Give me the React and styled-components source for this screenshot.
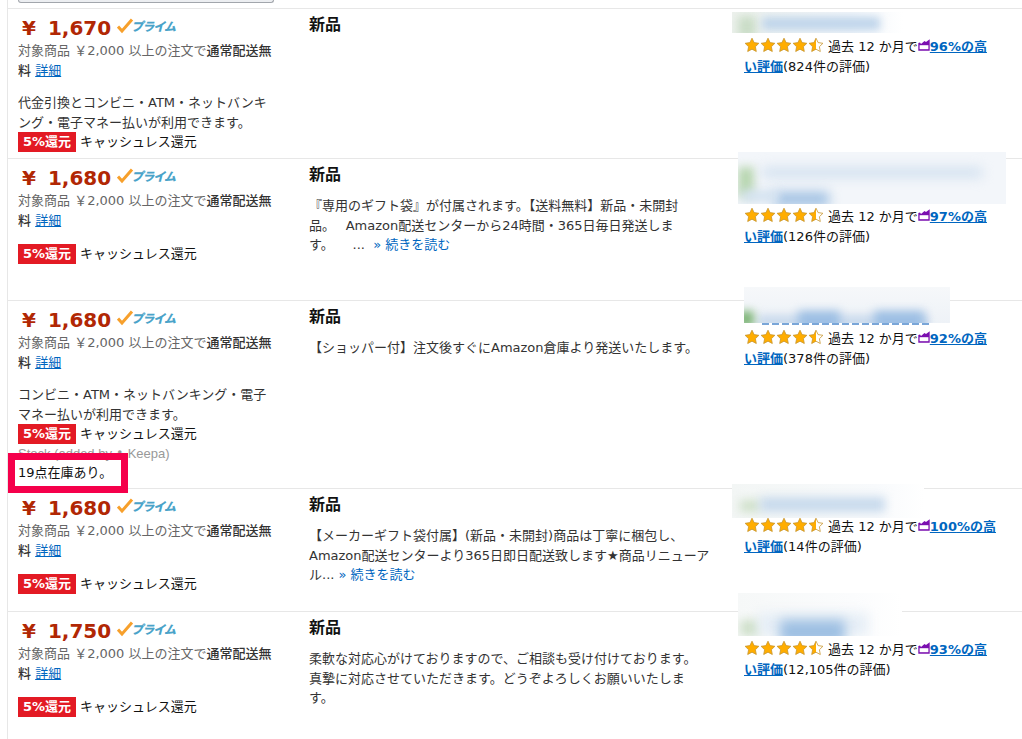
import React from "react"
import styled, { createGlobalStyle } from "styled-components"

const GlobalStyle = createGlobalStyle`
    html, body {
        margin: 0;
        padding: 0;
        background: #fff;
        overflow: hidden;
    }
    body {
        font-family: "DejaVu Sans", "Noto Sans CJK JP", sans-serif;
        font-size: 13px;
        line-height: 19.5px;
        color: #111;
    }
`

const Page = styled.div`
    position: relative;
    margin-left: 7px;
    height: 739px;
    overflow: hidden;
    border-left: 1px solid #e7e7e7;
`

const TopButton = styled.div`
    box-sizing: border-box;
    width: 256px;
    height: 3px;
    margin-left: 10px;
    margin-bottom: 5px;
    border: 1px solid #a2a6ac;
    border-top: none;
    border-radius: 0 0 3px 3px;
    background: #eceef1;
`

const Row = styled.div`
    position: relative;
    display: grid;
    grid-template-columns: 255px 385px 266px;
    column-gap: 36px;
    box-sizing: border-box;
    height: ${(p) => p.$height}px;
    padding: 5px 0 0 10px;
    border-top: 1px solid #e7e7e7;
`

const OfferCol = styled.div`
    position: relative;
`

const PriceLine = styled.div`
    display: flex;
    align-items: center;
    height: 28px;
    margin-bottom: -1px;
`

const Price = styled.span`
    font-size: 20px;
    font-weight: 700;
    line-height: 28px;
    word-spacing: 5px;
    color: #b12704;
    margin-left: 4px;
    white-space: pre;
`

const PrimeBadge = styled.span`
    display: inline-flex;
    align-items: center;
    margin-left: 6px;
    margin-top: -4px;
`

const PrimeText = styled.span`
    font-family: "Noto Sans CJK JP", sans-serif;
    font-size: 12px;
    font-weight: 900;
    font-style: italic;
    color: #4aa3c9;
    letter-spacing: -1px;
    margin-left: -3px;
    line-height: 16px;
`

const Shipping = styled.div`
    color: #666;
`

const ShippingStrong = styled.span`
    color: #333;
    font-weight: 500;
`

const TextLink = styled.a`
    color: #0066c0;
    text-decoration: ${(p) => (p.$underline ? "underline" : "none")};
`

const Payment = styled.div`
    margin-top: ${(p) => p.$top}px;
    color: #333;
`

const CashlessRow = styled.div`
    display: flex;
    align-items: center;
    gap: 4px;
    height: 20px;
    margin-top: ${(p) => p.$top || 0}px;
`

const CashlessBadge = styled.span`
    display: inline-block;
    width: 58px;
    height: 20px;
    line-height: 20px;
    text-align: center;
    background: #e31a24;
    color: #fff;
    font-weight: 700;
    font-size: 13px;
    white-space: nowrap;
`

const Keepa = styled.div`
    font-family: "Liberation Sans", sans-serif;
    color: #999;
`

const StockText = styled.div`
    color: #111;
    margin-top: -1px;
`

const RedFrame = styled.div`
    position: absolute;
    z-index: 2;
    left: -10px;
    top: 147px;
    width: 120px;
    height: 40px;
    box-sizing: border-box;
    border: 7px solid #f5004b;
`

const ConditionCol = styled.div`
    padding-top: 1px;
`

const ConditionTitle = styled.div`
    font-size: 16px;
    font-weight: 700;
    line-height: 20px;
    margin-bottom: 11px;
`

const Description = styled.div`
    color: #333;
    white-space: pre;
`

const SellerCol = styled.div`
    position: relative;
    padding-top: ${(p) => p.$top}px;
    margin-left: 14px;
`

const SellerInfo = styled.div`
    color: #111;
`

const Stars = styled.span`
    display: inline-flex;
    vertical-align: -2px;
    margin-right: 4px;
`

const Trend = styled.svg`
    vertical-align: 0;
`

const GoodLink = styled.a`
    color: #0066c0;
    font-weight: 700;
    text-decoration: underline;
`

const BlurPatch = styled.div`
    position: absolute;
    z-index: 1;
    left: ${(p) => p.$left}px;
    top: ${(p) => p.$top}px;
    width: ${(p) => p.$width}px;
    height: ${(p) => p.$height}px;
    overflow: hidden;
    background: ${(p) => p.$bg};
`

const BlurSpot = styled.div`
    position: absolute;
    filter: blur(${(p) => p.$blur || 7}px);
    background: ${(p) => p.$color};
`

const NameSliver = styled.div`
    position: absolute;
    left: 18px;
    top: 17px;
    width: 168px;
    height: 2px;
    background: repeating-linear-gradient(90deg, #7aa6d8 0 7px, #fff 7px 10px);
`

const Star = ({ half }) => (
    <svg width="16" height="16" viewBox="0 0 16 16">
        <defs>
            <linearGradient id="halfStar">
                <stop offset="52%" stopColor="#ffad00" />
                <stop offset="52%" stopColor="#fff" />
            </linearGradient>
        </defs>
        <path
            d="M8 1.2l2.1 4.4 4.8.7-3.5 3.4.9 4.8L8 12.2l-4.3 2.3.9-4.8-3.5-3.4 4.8-.7z"
            fill={half ? "url(#halfStar)" : "#ffad00"}
            stroke="#c8962e"
            strokeWidth="0.8"
            strokeLinejoin="round"
        />
    </svg>
)

const PrimeLogo = () => (
    <PrimeBadge>
        <svg width="17" height="16" viewBox="0 0 17 16">
            <path d="M1 8.5l4 4.5L15 1.5" fill="none" stroke="#f7a02c" strokeWidth="3" />
        </svg>
        <PrimeText>プライム</PrimeText>
    </PrimeBadge>
)

const TrendIcon = () => (
    <Trend width="12" height="12" viewBox="0 0 12 12">
        <path d="M0.3 4v7.7h11.4V.3L8 3 6.5 2 3 5 2 3.5z" fill="#7b0fb0" />
        <rect x="1.6" y="6.2" width="8.8" height="4" fill="#fff" />
    </Trend>
)

const blurs = [
    {
        box: { left: -12, top: -2, width: 171, height: 21, bg: "linear-gradient(90deg,#eef2ee,#f2f6fa 70%,#fff)" },
        spots: [
            { left: 6, top: 4, width: 18, height: 22, color: "#c9dcc6", blur: 5 },
            { left: 30, top: 5, width: 118, height: 13, color: "#bed4ea", blur: 4 },
        ],
    },
    {
        box: { left: -6, top: -12, width: 268, height: 52, bg: "#f3f6fa" },
        spots: [
            { left: 0, top: 15, width: 16, height: 30, color: "#b8d6b0", blur: 5 },
            { left: 24, top: 15, width: 220, height: 11, color: "#d4e2f0", blur: 6 },
            { left: 36, top: 40, width: 55, height: 14, color: "#9fc0e2", blur: 6 },
            { left: 4, top: 38, width: 36, height: 12, color: "#d4e2f0", blur: 5 },
        ],
    },
    {
        box: { left: 0, top: -19, width: 206, height: 36, bg: "linear-gradient(180deg,#f6f8fa,#eef2f7)" },
        spots: [
            { left: 14, top: 28, width: 170, height: 12, color: "#c8d9ec", blur: 4 },
            { left: -6, top: 24, width: 16, height: 16, color: "#7fb578", blur: 4 },
            { left: 54, top: 24, width: 42, height: 20, color: "#9dbfe4", blur: 5 },
            { left: 130, top: 24, width: 50, height: 20, color: "#9dbfe4", blur: 5 },
        ],
        sliver: true,
    },
    {
        box: { left: -12, top: -10, width: 192, height: 34, bg: "linear-gradient(90deg,#f3f6f5,#f8fafc 75%,#fff)" },
        spots: [
            { left: 8, top: 16, width: 20, height: 12, color: "#cfe0ca", blur: 5 },
            { left: 28, top: 13, width: 125, height: 15, color: "#c8daec", blur: 5 },
        ],
    },
    {
        box: { left: -6, top: -24, width: 164, height: 43, bg: "linear-gradient(90deg,#f6f8f8,#fbfcfd 70%,#fff)" },
        spots: [
            { left: 2, top: 27, width: 20, height: 16, color: "#cfe0ca", blur: 5 },
            { left: 20, top: 20, width: 110, height: 23, color: "#e6eef6", blur: 6 },
            { left: 42, top: 27, width: 65, height: 23, color: "#9dbfe2", blur: 6 },
        ],
    },
]

const offers = [
    {
        price: "1,670",
        height: 150,
        payment: "代金引換とコンビニ・ATM・ネットバンキング・電子マネー払いが利用できます。",
        paymentTop: 13,
        sellerTop: 23,
        percent: "96",
        reviews: "824",
    },
    {
        price: "1,680",
        height: 142,
        cashlessTop: 14,
        desc: ["『専用のギフト袋』が付属されます。【送料無料】新品・未開封", "品。　 Amazon配送センターから24時間・365日毎日発送しま", "す。　   ... "],
        more: true,
        sellerTop: 43,
        percent: "97",
        reviews: "126",
    },
    {
        price: "1,680",
        height: 188,
        payment: "コンビニ・ATM・ネットバンキング・電子マネー払いが利用できます。",
        paymentTop: 13,
        stock: "19点在庫あり。",
        desc: ["【ショッパー付】注文後すぐにAmazon倉庫より発送いたします。"],
        sellerTop: 23,
        percent: "92",
        reviews: "378",
    },
    {
        price: "1,680",
        height: 123,
        cashlessTop: 14,
        desc: ["【メーカーギフト袋付属】(新品・未開封)商品は丁寧に梱包し、", "Amazon配送センターより365日即日配送致します★商品リニューア", "ル..."],
        more: true,
        sellerTop: 23,
        percent: "100",
        reviews: "14",
    },
    {
        price: "1,750",
        height: 128,
        cashlessTop: 14,
        desc: ["柔軟な対応心がけておりますので、ご相談も受け付けております。", "真摯に対応させていただきます。どうぞよろしくお願いいたしま", "す。"],
        sellerTop: 23,
        percent: "93",
        reviews: "12,105",
    },
]

const OfferRow = ({ offer, blur }) => (
    <Row $height={offer.height}>
        <OfferCol>
            <PriceLine>
                <Price>¥ {offer.price}</Price>
                <PrimeLogo />
            </PriceLine>
            <Shipping>
                対象商品 ￥2,000 以上の注文で<ShippingStrong>通常配送無料</ShippingStrong> <TextLink $underline>詳細</TextLink>
            </Shipping>
            {offer.payment && <Payment $top={offer.paymentTop}>{offer.payment}</Payment>}
            <CashlessRow $top={offer.cashlessTop}>
                <CashlessBadge>5%還元</CashlessBadge>
                キャッシュレス還元
            </CashlessRow>
            {offer.stock && (
                <>
                    <Keepa>Stock (added by ♣ Keepa)</Keepa>
                    <StockText>{offer.stock}</StockText>
                    <RedFrame />
                </>
            )}
        </OfferCol>
        <ConditionCol>
            <ConditionTitle>新品</ConditionTitle>
            {offer.desc && (
                <Description>
                    {offer.desc.map((line, i) => (
                        <div key={i}>
                            {line}
                            {offer.more && i === offer.desc.length - 1 && <TextLink> » 続きを読む</TextLink>}
                        </div>
                    ))}
                </Description>
            )}
        </ConditionCol>
        <SellerCol $top={offer.sellerTop}>
            <SellerInfo>
                <Stars>
                    <Star />
                    <Star />
                    <Star />
                    <Star />
                    <Star half />
                </Stars>
                過去 12 か月で<TrendIcon /><GoodLink>{offer.percent}%の高い評価</GoodLink>({offer.reviews}件の評価)
            </SellerInfo>
            <BlurPatch
                $left={blur.box.left}
                $top={blur.box.top}
                $width={blur.box.width}
                $height={blur.box.height}
                $bg={blur.box.bg}
            >
                {blur.spots.map((s, i) => (
                    <BlurSpot
                        key={i}
                        $color={s.color}
                        $blur={s.blur}
                        style={{ left: s.left, top: s.top, width: s.width, height: s.height }}
                    />
                ))}
            </BlurPatch>
            {blur.sliver && <NameSliver />}
        </SellerCol>
    </Row>
)

const App = () => {
    return (
        <Page>
            <GlobalStyle />
            <TopButton />
            {offers.map((offer, i) => (
                <OfferRow key={i} offer={offer} blur={blurs[i]} />
            ))}
        </Page>
    )
}

export default App
